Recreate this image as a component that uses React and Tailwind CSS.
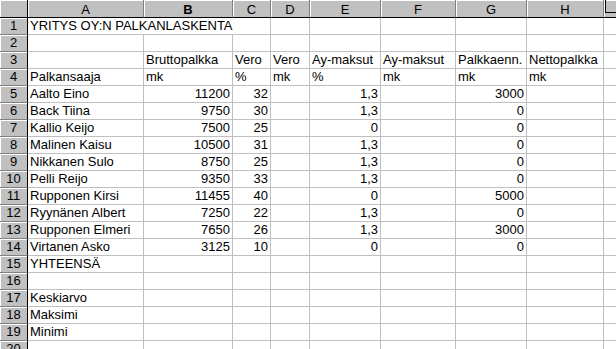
import React from "react";

const W = [
  "w-[116px]",
  "w-[89px]",
  "w-[38px]",
  "w-[39px]",
  "w-[71px]",
  "w-[75px]",
  "w-[71px]",
  "w-[77px]",
];
const LETTERS = ["A", "B", "C", "D", "E", "F", "G", "H"];

const n = (v) => ({ v, r: true });

const ROWS = [
  null, // row 1 handled separately
  [],
  ["", "Bruttopalkka", "Vero", "Vero", "Ay-maksut", "Ay-maksut", "Palkkaenn.", "Nettopalkka"],
  ["Palkansaaja", "mk", "%", "mk", "%", "mk", "mk", "mk"],
  ["Aalto Eino", n("11200"), n("32"), "", n("1,3"), "", n("3000"), ""],
  ["Back Tiina", n("9750"), n("30"), "", n("1,3"), "", n("0"), ""],
  ["Kallio Keijo", n("7500"), n("25"), "", n("0"), "", n("0"), ""],
  ["Malinen Kaisu", n("10500"), n("31"), "", n("1,3"), "", n("0"), ""],
  ["Nikkanen Sulo", n("8750"), n("25"), "", n("1,3"), "", n("0"), ""],
  ["Pelli Reijo", n("9350"), n("33"), "", n("1,3"), "", n("0"), ""],
  ["Rupponen Kirsi", n("11455"), n("40"), "", n("0"), "", n("5000"), ""],
  ["Ryynänen Albert", n("7250"), n("22"), "", n("1,3"), "", n("0"), ""],
  ["Rupponen Elmeri", n("7650"), n("26"), "", n("1,3"), "", n("3000"), ""],
  ["Virtanen Asko", n("3125"), n("10"), "", n("0"), "", n("0"), ""],
  ["YHTEENSÄ"],
  [],
  ["Keskiarvo"],
  ["Maksimi"],
  ["Minimi"],
  [],
];

function RowHead({ num }) {
  return (
    <div className="w-[28px] h-[17px] shrink-0 bg-[#c0c0c0] border-r border-b border-r-black border-b-[#808080] shadow-[inset_1px_1px_0_#ffffff] text-center leading-[16px]">
      {num}
    </div>
  );
}

function Cell({ w, item }) {
  const isObj = item && typeof item === "object";
  const v = isObj ? item.v : item;
  const right = isObj && item.r;
  return (
    <div
      className={`${w} h-[17px] shrink-0 border-r border-b border-[#c0c0c0] whitespace-nowrap leading-[16px] ${
        right ? "text-right pr-[2px]" : "pl-[2px]"
      }`}
    >
      {v}
    </div>
  );
}

function Filler() {
  return <div className="flex-1 h-[17px] border-b border-[#c0c0c0]" />;
}

export default function App() {
  return (
    <div
      className="w-[616px] h-[349px] overflow-hidden bg-white text-black text-[13px]"
      style={{ fontFamily: '"Liberation Sans", Arial, sans-serif' }}
    >
      {/* Column header row */}
      <div className="flex">
        <div className="w-[28px] h-[18px] shrink-0 bg-[#c0c0c0] border-r border-b border-black shadow-[inset_1px_1px_0_#ffffff]" />
        {LETTERS.map((l, i) => (
          <div
            key={l}
            className={`${W[i]} h-[18px] shrink-0 bg-[#c0c0c0] border-r border-b border-r-[#808080] border-b-black shadow-[inset_1px_1px_0_#ffffff] text-center leading-[16px] pt-[2px] ${
              l === "B" ? "font-bold" : ""
            }`}
          >
            {l}
          </div>
        ))}
        <div className="flex-1 h-[18px] bg-[#c0c0c0] border-b border-black shadow-[inset_1px_1px_0_#ffffff] relative">
          <div className="absolute left-[1px] top-0 w-[11px] h-[13px] border-l border-b border-black" />
        </div>
      </div>

      {/* Row 1 with overflowing title */}
      <div className="flex">
        <RowHead num={1} />
        <div className="w-[243px] h-[17px] shrink-0 border-r border-b border-[#c0c0c0] whitespace-nowrap leading-[16px] pl-[2px]">
          YRITYS OY:N PALKANLASKENTA
        </div>
        {W.slice(3).map((w, i) => (
          <Cell key={i} w={w} item="" />
        ))}
        <Filler />
      </div>

      {ROWS.slice(1).map((row, ri) => (
        <div className="flex" key={ri}>
          <RowHead num={ri + 2} />
          {W.map((w, ci) => (
            <Cell key={ci} w={w} item={row[ci] ?? ""} />
          ))}
          <Filler />
        </div>
      ))}
    </div>
  );
}
